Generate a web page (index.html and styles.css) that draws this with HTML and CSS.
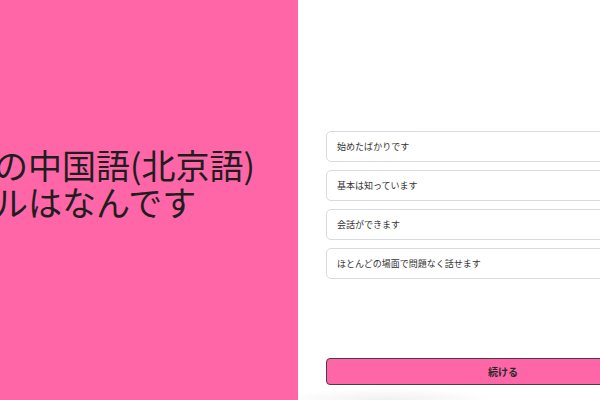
FILE: index.html
```html
<!DOCTYPE html>
<html lang="ja">
<head>
<meta charset="utf-8">
<title>レベル選択</title>
<link rel="stylesheet" href="styles.css">
</head>
<body>
<div class="page">
  <section class="hero">
    <h1 class="question">あなたの中国語(北京語)<br>のレベルはなんです<br>か？</h1>
  </section>
  <section class="panel">
    <div class="options">
      <button class="option">始めたばかりです</button>
      <button class="option">基本は知っています</button>
      <button class="option">会話ができます</button>
      <button class="option">ほとんどの場面で問題なく話せます</button>
    </div>
    <button class="continue">続ける</button>
  </section>
</div>
</body>
</html>
```

FILE: styles.css
```css
html, body {
  margin: 0;
  padding: 0;
  width: 600px;
  height: 400px;
  overflow: hidden;
  background: #ffffff;
}

.page {
  display: flex;
  width: 708px;
  height: 400px;
  font-family: "Noto Sans CJK JP", "Noto Sans", sans-serif;
}

.hero {
  flex: 0 0 298px;
  background: #ff66a8;
  display: flex;
  align-items: center;
  overflow: hidden;
}

.question {
  margin: 2px 0 0 -108px;
  white-space: nowrap;
  font-size: 34px;
  line-height: 37px;
  font-weight: 400;
  color: #1e1e1e;
}

.panel {
  flex: 1;
  display: flex;
  flex-direction: column;
  padding: 131px 28px 15px 28px;
  background:
    radial-gradient(ellipse 110px 12px at 90px 100%, rgba(0, 0, 0, 0.06), rgba(0, 0, 0, 0)),
    #ffffff;
}

.options {
  display: flex;
  flex-direction: column;
  gap: 8px;
}

.option {
  height: 31px;
  box-sizing: border-box;
  border: 1px solid #d9d9e3;
  border-radius: 5px;
  background: #ffffff;
  text-align: left;
  padding: 0 10px;
  font-family: inherit;
  font-size: 9px;
  color: #333333;
}

.continue {
  margin-top: auto;
  height: 27px;
  box-sizing: border-box;
  border: 1.5px solid #4a3d45;
  border-radius: 4px;
  background: #ff66a8;
  font-family: inherit;
  font-size: 10px;
  font-weight: 700;
  color: #2a2a2a;
}
```
